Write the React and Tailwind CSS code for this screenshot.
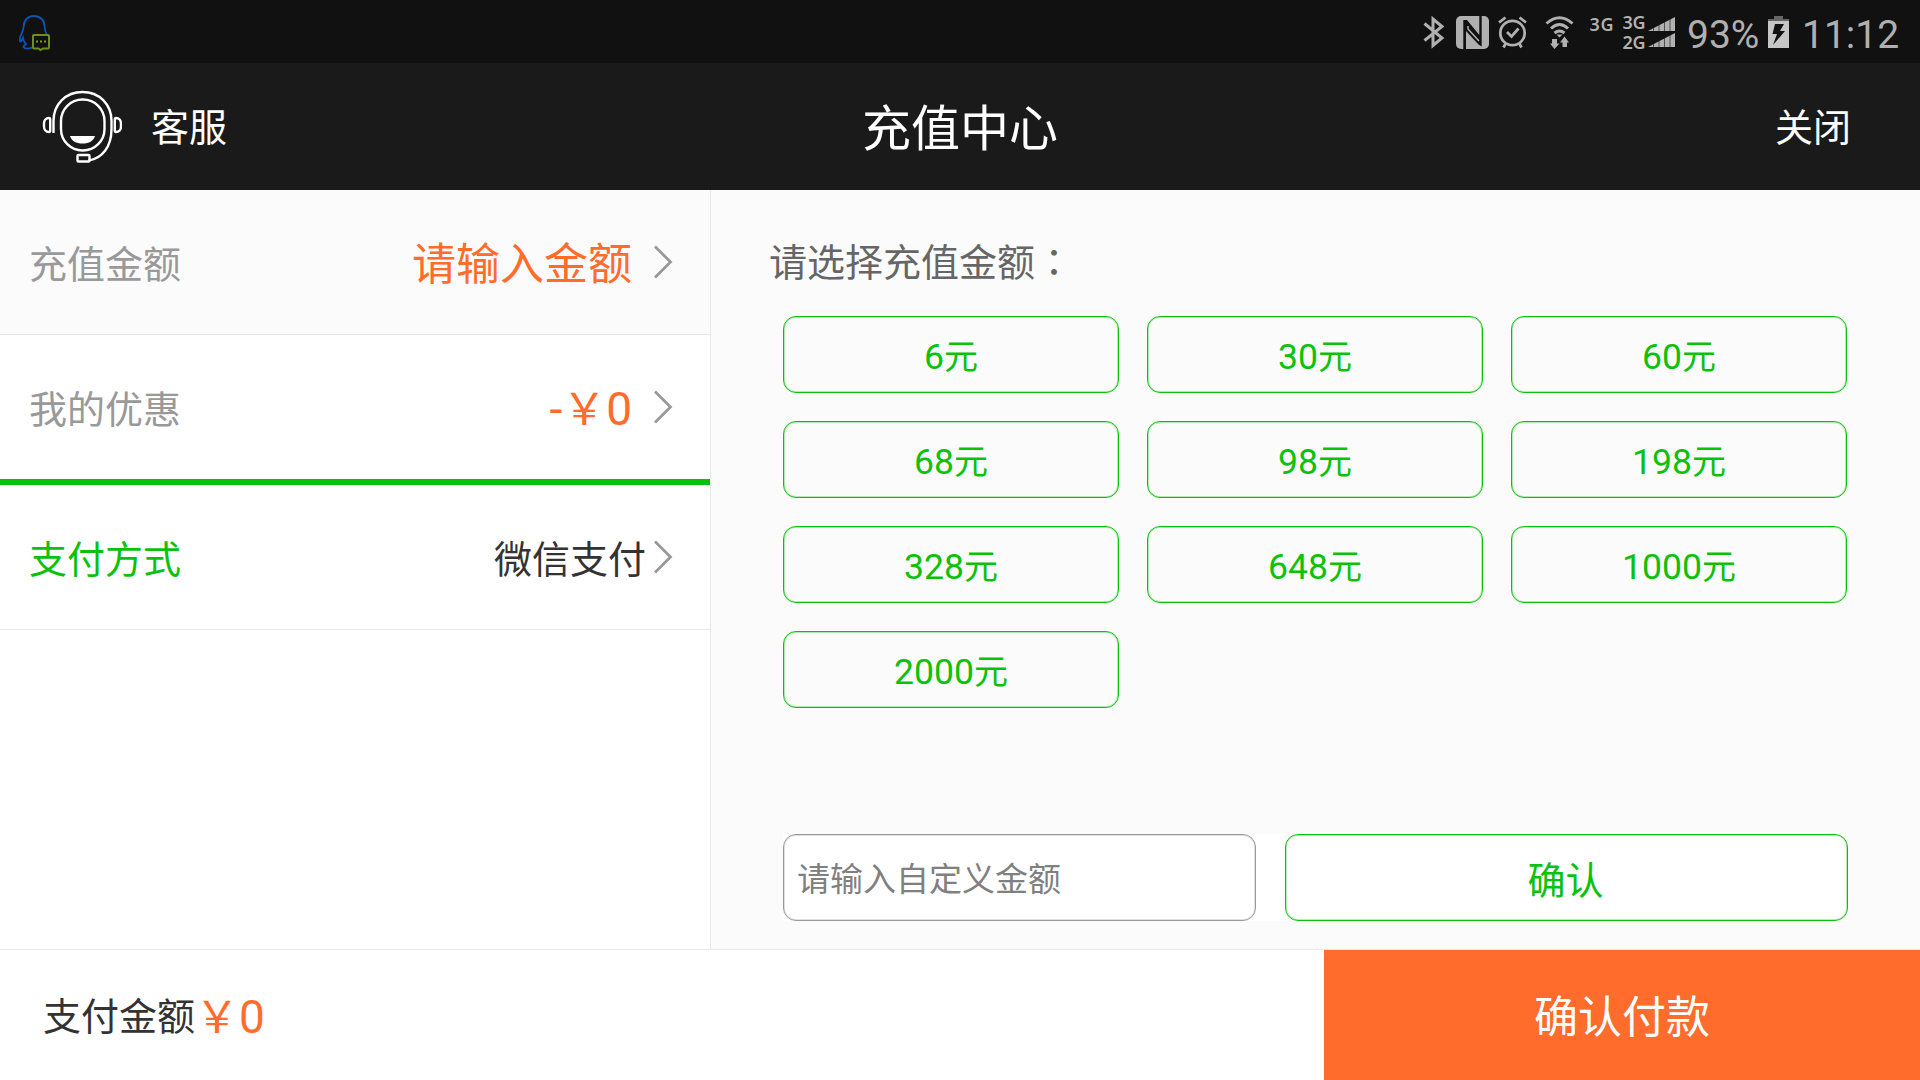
function QQIcon() {
  return (
    <svg className="h-[40px] w-[34px]" viewBox="0 0 34 40" fill="none">
      <path d="M29 21C27 18 26.800 16 26.600 12C26.300 6 22 2 16 2C10 2 6 6 5.700 12C5.600 15 5 17 3.500 20C2 23 1.500 26 2.200 27.500C3.500 28 4.500 25 5 24C5.300 27 6.500 28.500 8 30C7 31 5.500 32 5.500 33C7 35.500 12 35 15 33" stroke="#0b55b0" strokeWidth="1.800" />
      <path d="M16 21H30Q31 21 31 22V33Q31 34.500 30 34.500H25L22.500 36L20.500 34.500H16Q15 34.500 15 33V22Q15 21 16 21Z" fill="#111" stroke="#6f9016" strokeWidth="2" />
      <path d="M18 26.500h2v2h-2zM22 26.500h2v2h-2zM26 26.500h2v2h-2z" fill="#7d9d1d" />
    </svg>
  );
}

function ServiceIcon() {
  return (
    <svg className="h-[74px] w-[80px]" viewBox="0 0 80 74" fill="none" stroke="#fff" strokeWidth="2.400">
      <path d="M11.500 43V31C11.500 14 24 2 40.500 2S69.500 14 69.500 31V39C69.500 57 60 68.500 46.500 70.500" />
      <rect x="19" y="9.500" width="43.500" height="51" rx="21.500" />
      <rect x="35.500" y="65" width="12" height="6.500" rx="1" />
      <path d="M7 28Q8.200 28 8.200 29.500V40.500Q8.200 42 7 42C4 42 2 39.500 2 36.500V33.500C2 30.500 4 28 7 28ZM74 28Q72.800 28 72.800 29.500V40.500Q72.800 42 74 42C77 42 79 39.500 79 36.500V33.500C79 30.500 77 28 74 28Z" />
      <path d="M28 46H53C51.500 51 47 53.500 40.500 53.500S29.500 51 28 46Z" fill="#fff" stroke="none" />
    </svg>
  );
}

function StatusIcons() {
  return (
    <svg className="h-[64px] w-[260px] shrink-0" viewBox="1420 0 260 64" fill="none">
      <path d="M1424.500 23.500L1442 38L1433 45.500V19L1442 26.500L1424.500 40.500" stroke="#b0b0b0" strokeWidth="3" />
      <rect x="1456" y="16" width="33" height="33" rx="5" fill="#b0b0b0" />
      <path d="M1463.300 20L1467 20L1479.300 35V16H1481.700V46.500L1478.500 44.500L1466 31V49H1463.300Z" fill="#111" />
      <path d="M1468 26V29L1479 41" stroke="#b0b0b0" strokeWidth="1.500" />
      <g stroke="#b0b0b0" strokeWidth="2.800">
        <circle cx="1512.500" cy="33" r="12.200" />
        <path d="M1507 32L1511.500 36.500L1518.500 28.500M1499 22.500L1505.500 17.500M1526 22.500L1519.500 17.500M1506 43L1503.500 47.500M1519 43L1521.500 47.500" />
      </g>
      <g stroke="#b0b0b0" strokeWidth="3">
        <path d="M1546.500 23.500Q1559.500 12 1572.500 23.500M1551 28.500Q1559.500 20.500 1568 28.500M1554.500 33Q1559.500 29 1564.500 33" />
      </g>
      <path d="M1556.500 34.500H1562.500L1559.500 37.500ZM1552 39H1557V43.500H1559.500L1554.500 49L1550 43.500H1552ZM1562.500 47V42.500H1560L1564.500 36.500L1569 42.500H1567V47Z" fill="#b0b0b0" />
      <path d="M1648 31L1675 17V31ZM1648 47L1675 33V47Z" fill="#b0b0b0" />
      <path d="M1653.500 17V47M1659 17V47M1664.500 17V47M1670 17V47" stroke="#111" strokeOpacity=".6" strokeWidth="1" />
      <g fill="#b0b0b0" className="font-['Noto_Sans',sans-serif] text-[18px] font-semibold">
        <text x="1589.500" y="31" textLength="24">3G</text>
        <text x="1622.500" y="28.500" textLength="23">3G</text>
        <text x="1622.500" y="48.500" textLength="23">2G</text>
      </g>
    </svg>
  );
}

function Battery() {
  return (
    <svg className="h-[32px] w-[21px]" viewBox="0 0 21 32">
      <path d="M6 0H15V3H21V6H0V3H6Z" fill="#666" />
      <rect y="5" width="21" height="27" fill="#c6c6c6" />
      <path d="M7 8H16L12 15H17L5 29L9 18H4.500Z" fill="#111" />
    </svg>
  );
}

function Chevron() {
  return (
    <svg className="h-[34px] w-[20px] shrink-0" viewBox="0 0 20 34" fill="none">
      <path d="M2 1.500L17.500 17L2 32.500" stroke="#999" strokeWidth="2.800" />
    </svg>
  );
}

const amounts = [6, 30, 60, 68, 98, 198, 328, 648, 1000, 2000];

export default function App() {
  return (
    <div className="flex h-[1080px] w-[1920px] flex-col overflow-hidden bg-white font-['Roboto','Noto_Sans_CJK_SC',sans-serif] whitespace-nowrap">
      <div className="flex h-[63px] shrink-0 items-start bg-[#111] text-[#b0b0b0]">
        <div className="pt-[14px] pl-[18px]"><QQIcon /></div>
        <div className="ml-auto flex h-[63px]">
          <StatusIcons />
          <div className="flex w-[240px] pt-[10px] text-[39px] leading-[50px]">
            <span className="ml-[7px] w-[81px]">93%</span>
            <span className="mt-[6px]"><Battery /></span>
            <span className="ml-[13px]">11:12</span>
          </div>
        </div>
      </div>

      <header className="grid h-[127px] shrink-0 grid-cols-3 items-center bg-[#1a1a1a] text-[38px] text-white">
        <div className="flex items-center pl-[42px]">
          <ServiceIcon />
          <span className="ml-[29px] pt-[4px]">客服</span>
        </div>
        <h1 className="pt-[6px] text-center text-[49px]">充值中心</h1>
        <button className="justify-self-end pt-[4px] pr-[69px]">关闭</button>
      </header>

      <main className="flex h-[759px] shrink-0">
        <section className="w-[711px] shrink-0 border-r border-[#e8e8e8] text-[38px]">
          <div className="flex h-[145px] items-center border-b border-[#e8e8e8] bg-[#fbfbfb] pr-[37px] pl-[29px]">
            <span className="pt-[6px] text-[#999]">充值金额</span>
            <span className="ml-auto pt-[5px] text-[44px] text-[#ff6c2c]">请输入金额</span>
            <span className="ml-[21px]"><Chevron /></span>
          </div>
          <div className="flex h-[144px] items-center pr-[37px] pl-[29px]">
            <span className="pt-[6px] text-[#999]">我的优惠</span>
            <span className="ml-auto pt-[5px] text-[46px] text-[#ff6c2c]">-<span className="text-[44px]">￥</span>0</span>
            <span className="ml-[21px]"><Chevron /></span>
          </div>
          <div className="h-[6px] bg-[#0bc20b]" />
          <div className="flex h-[145px] items-center border-b border-[#e8e8e8] pr-[37px] pl-[29px]">
            <span className="pt-[6px] text-[#0bc20b]">支付方式</span>
            <span className="ml-auto pt-[6px] text-[#333]">微信支付</span>
            <span className="ml-[7px]"><Chevron /></span>
          </div>
        </section>

        <section className="flex grow flex-col bg-[#fbfbfb] pr-[72px] pb-[28px] pl-[72px]">
          <h2 className="-ml-[14px] mt-[42px] h-[84px] text-[38px] leading-[56px] text-[#666]">
            请选择充值金额<span className="font-['Noto_Sans_CJK_TC',sans-serif]">：</span>
          </h2>
          <div className="grid w-[1064px] grid-cols-3 gap-[28px]">
            {amounts.map((n) => (
              <button key={n} className="h-[77px] rounded-[13px] border border-[#0bc20b] pt-[6px] text-[35.5px] text-[#0bc20b] shadow-[inset_0_0_0_1px_rgba(11,194,11,0.3)]">
                {n}<span className="text-[34px]">元</span>
              </button>
            ))}
          </div>
          <div className="mt-auto flex h-[87px] gap-[29px] bg-white">
            <input
              className="w-[473px] rounded-[13px] border border-[#999] px-[13px] pt-[5px] text-[33px] shadow-[inset_0_0_0_1px_rgba(153,153,153,0.3)] placeholder:text-[#808080]"
              placeholder="请输入自定义金额"
            />
            <button className="grow rounded-[13px] border border-[#0bc20b] pt-[7px] pr-[2px] text-[38px] text-[#0bc20b] shadow-[inset_0_0_0_1px_rgba(11,194,11,0.3)]">确认</button>
          </div>
        </section>
      </main>

      <footer className="flex h-[131px] shrink-0 border-t border-[#e8e8e8]">
        <div className="flex grow items-center pt-[5px] pl-[43px] text-[38px] text-[#333]">
          <span>支付金额</span>
          <span className="text-[46px] text-[#ff6c2c]"><span className="text-[44px]">￥</span>0</span>
        </div>
        <button className="w-[596px] bg-[#ff6c2c] pt-[5px] text-[44px] text-white">确认付款</button>
      </footer>
    </div>
  );
}
